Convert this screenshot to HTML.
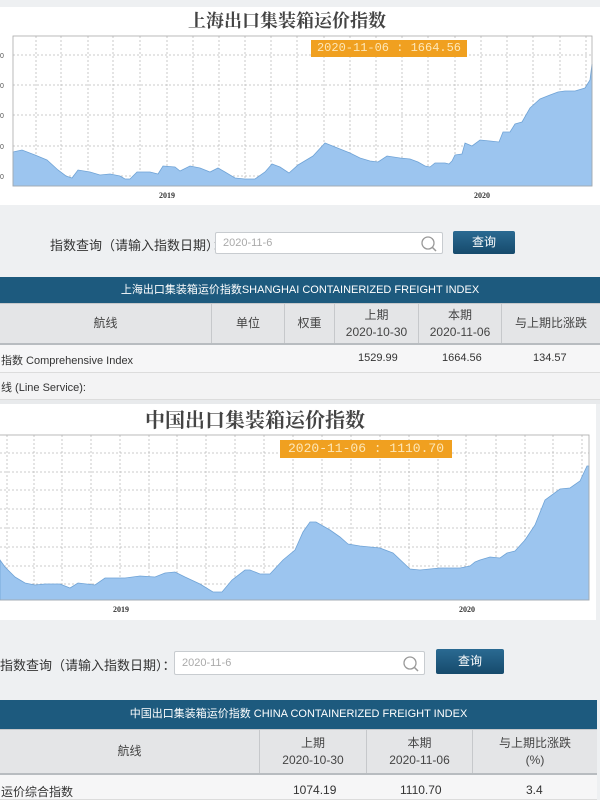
<!DOCTYPE html>
<html><head><meta charset="utf-8">
<style>
*{margin:0;padding:0;box-sizing:border-box}
body{width:600px;height:800px;overflow:hidden;background:#eef0f2;font-family:"Liberation Sans","Noto Sans CJK SC",sans-serif;position:relative;color:#333}
.a{position:absolute}
.white{background:#fff}
.title{font-family:"Liberation Serif","Noto Serif CJK SC",serif;font-weight:bold;color:#444;white-space:nowrap}
.tip{background:#f0a020;color:#fde7b8;font-family:"Liberation Mono",monospace;font-size:12px;text-align:center;line-height:17px;white-space:nowrap;overflow:hidden}
.lbl{font-size:13px;color:#333;white-space:nowrap}
.inp{background:#fff;border:1px solid #c8ccd0;border-radius:2px;font-size:11px;color:#aaa;padding-left:7px}
.btn{background:linear-gradient(#2a6a92,#164a6c);color:#fff;font-size:12px;text-align:center;border-radius:2px}
.bar{background:#1d5a7e;color:#fff;font-size:11px;text-align:center;white-space:nowrap}
.hd{background:#e4e5e7;border-top:1px solid #c6c8cb;border-bottom:2px solid #b8bcc0}
.cell{position:absolute;top:0;height:100%;border-left:1px solid #c6c8cb;font-size:12px;color:#444;display:flex;align-items:center;justify-content:center;text-align:center;line-height:17px}
.row{background:#f6f6f7;border-bottom:1px solid #dcdcdc;font-size:11px;color:#333}
.ax{font-size:8px;color:#333;font-family:"Liberation Serif",serif;font-weight:bold}
</style></head><body>

<!-- TOP SECTION -->
<div class="a white" style="left:0;top:7px;width:600px;height:198px"></div>
<div class="a title" style="left:188px;top:7px;font-size:18px">上海出口集装箱运价指数</div>
<svg class="a" style="left:0;top:0" width="600" height="205">
<g stroke="#bbb" stroke-dasharray="2,2" stroke-width="0.8">
<line x1="13" y1="55" x2="592" y2="55"/><line x1="13" y1="85" x2="592" y2="85"/><line x1="13" y1="115" x2="592" y2="115"/><line x1="13" y1="146" x2="592" y2="146"/><line x1="13" y1="176" x2="592" y2="176"/>
<line x1="36" y1="36" x2="36" y2="186"/><line x1="61" y1="36" x2="61" y2="186"/><line x1="88" y1="36" x2="88" y2="186"/><line x1="113" y1="36" x2="113" y2="186"/><line x1="140" y1="36" x2="140" y2="186"/><line x1="167" y1="36" x2="167" y2="186"/><line x1="193" y1="36" x2="193" y2="186"/><line x1="219" y1="36" x2="219" y2="186"/><line x1="245" y1="36" x2="245" y2="186"/><line x1="271" y1="36" x2="271" y2="186"/><line x1="297" y1="36" x2="297" y2="186"/><line x1="324" y1="36" x2="324" y2="186"/><line x1="350" y1="36" x2="350" y2="186"/><line x1="376" y1="36" x2="376" y2="186"/><line x1="402" y1="36" x2="402" y2="186"/><line x1="428" y1="36" x2="428" y2="186"/><line x1="455" y1="36" x2="455" y2="186"/><line x1="481" y1="36" x2="481" y2="186"/><line x1="507" y1="36" x2="507" y2="186"/><line x1="533" y1="36" x2="533" y2="186"/><line x1="560" y1="36" x2="560" y2="186"/><line x1="586" y1="36" x2="586" y2="186"/>
</g>
<path d="M13,152 L22,150 35,155 47,160 58,170 66,176 72,178 78,170 90,172 100,175 110,174 120,176 125,179 130,179 137,172 150,172 158,174 163,166 175,167 180,171 190,166 200,168 210,172 218,168 225,172 235,178 245,179 255,179 265,172 272,164 280,167 289,173 298,165 313,156 325,143 335,147 350,153 360,158 370,161 378,162 387,156 400,158 410,159 418,162 425,166 430,167 435,163 445,163 449,164 452,161 455,155 462,154 465,143 472,146 480,140 490,141 499,142 503,132 510,132 515,124 522,122 530,108 540,99 550,95 558,92 565,91 575,91 585,88 590,80 592,64 L592,186 L13,186 Z" fill="#9cc5ef" stroke="#6fa3d6" stroke-width="0.8"/>
<rect x="13" y="36" width="579" height="150" fill="none" stroke="#aaa" stroke-width="0.8"/>
<g fill="#555" font-size="7" font-family="Liberation Sans"><text x="0" y="58">0</text><text x="0" y="88">0</text><text x="0" y="118">0</text><text x="0" y="149">0</text><text x="0" y="179">0</text></g>
</svg>
<div class="a tip" style="left:311px;top:40px;width:156px;height:17px">2020-11-06 : 1664.56</div>
<div class="a ax" style="left:159px;top:191px">2019</div>
<div class="a ax" style="left:474px;top:191px">2020</div>

<div class="a lbl" style="left:50px;top:235px">指数查询（请输入指数日期）：</div>
<div class="a inp" style="left:215px;top:232px;width:228px;height:22px;line-height:20px">2020-11-6
<svg class="a" style="right:4px;top:2px" width="18" height="18"><circle cx="8" cy="8" r="6" fill="none" stroke="#999" stroke-width="1.3"/><line x1="12.5" y1="12.5" x2="16" y2="16" stroke="#999" stroke-width="1.5"/></svg></div>
<div class="a btn" style="left:453px;top:231px;width:62px;height:23px;line-height:23px">查询</div>

<div class="a bar" style="left:0;top:277px;width:600px;height:26px;line-height:26px">上海出口集装箱运价指数SHANGHAI CONTAINERIZED FREIGHT INDEX</div>
<div class="a hd" style="left:0;top:303px;width:600px;height:42px">
<div class="cell" style="left:0;width:211px;border-left:none">航线</div>
<div class="cell" style="left:211px;width:73px">单位</div>
<div class="cell" style="left:284px;width:50px">权重</div>
<div class="cell" style="left:334px;width:84px">上期<br>2020-10-30</div>
<div class="cell" style="left:418px;width:83px">本期<br>2020-11-06</div>
<div class="cell" style="left:501px;width:99px">与上期比涨跌</div>
</div>
<div class="a row" style="left:0;top:345px;width:600px;height:28px">
<span class="a" style="left:1px;top:7px">指数 Comprehensive Index</span>
<span class="a" style="left:358px;top:7px">1529.99</span>
<span class="a" style="left:442px;top:7px">1664.56</span>
<span class="a" style="left:533px;top:7px">134.57</span>
</div>
<div class="a row" style="left:0;top:373px;width:600px;height:27px;background:#f3f3f4">
<span class="a" style="left:1px;top:6px">线 (Line Service):</span></div>

<!-- BOTTOM SECTION -->
<div class="a" style="left:0;top:400px;width:600px;height:4px;background:#e8eaec"></div>
<div class="a white" style="left:0;top:404px;width:596px;height:216px"></div>
<div class="a title" style="left:145px;top:404px;font-size:20px">中国出口集装箱运价指数</div>
<svg class="a" style="left:0;top:400px" width="600" height="220">
<g stroke="#bbb" stroke-dasharray="2,2" stroke-width="0.8">
<line x1="0" y1="53" x2="589" y2="53"/><line x1="0" y1="72" x2="589" y2="72"/><line x1="0" y1="90" x2="589" y2="90"/><line x1="0" y1="109" x2="589" y2="109"/><line x1="0" y1="128" x2="589" y2="128"/><line x1="0" y1="147" x2="589" y2="147"/><line x1="0" y1="166" x2="589" y2="166"/><line x1="0" y1="184" x2="589" y2="184"/>
<line x1="7" y1="35" x2="7" y2="200"/><line x1="34" y1="35" x2="34" y2="200"/><line x1="62" y1="35" x2="62" y2="200"/><line x1="91" y1="35" x2="91" y2="200"/><line x1="120" y1="35" x2="120" y2="200"/><line x1="149" y1="35" x2="149" y2="200"/><line x1="177" y1="35" x2="177" y2="200"/><line x1="206" y1="35" x2="206" y2="200"/><line x1="235" y1="35" x2="235" y2="200"/><line x1="264" y1="35" x2="264" y2="200"/><line x1="293" y1="35" x2="293" y2="200"/><line x1="322" y1="35" x2="322" y2="200"/><line x1="351" y1="35" x2="351" y2="200"/><line x1="380" y1="35" x2="380" y2="200"/><line x1="409" y1="35" x2="409" y2="200"/><line x1="438" y1="35" x2="438" y2="200"/><line x1="466" y1="35" x2="466" y2="200"/><line x1="496" y1="35" x2="496" y2="200"/><line x1="525" y1="35" x2="525" y2="200"/><line x1="553" y1="35" x2="553" y2="200"/><line x1="582" y1="35" x2="582" y2="200"/>
</g>
<path d="M0,160 L5,167 15,177 25,183 35,185 45,184 60,184 70,188 78,183 95,185 105,178 125,178 140,176 155,177 165,173 175,172 185,177 200,184 213,192 222,192 232,180 245,170 250,170 260,174 270,174 283,160 295,150 303,132 310,122 316,122 330,130 340,137 348,144 360,146 370,147 380,148 393,153 410,169 420,170 440,168 460,168 470,166 475,162 480,160 490,157 500,158 507,153 515,151 525,140 535,125 545,100 560,89 570,88 580,81 587,66 L589,66 L589,200 L0,200 Z" fill="#9cc5ef" stroke="#6fa3d6" stroke-width="0.8"/>
<rect x="-1" y="35" width="590" height="165" fill="none" stroke="#aaa" stroke-width="0.8"/>
</svg>
<div class="a tip" style="left:280px;top:440px;width:172px;height:18px;line-height:18px;font-size:13px">2020-11-06 : 1110.70</div>
<div class="a ax" style="left:113px;top:605px">2019</div>
<div class="a ax" style="left:459px;top:605px">2020</div>

<div class="a lbl" style="left:0;top:655px">指数查询（请输入指数日期）：</div>
<div class="a inp" style="left:174px;top:651px;width:251px;height:24px;line-height:22px">2020-11-6
<svg class="a" style="right:4px;top:3px" width="18" height="18"><circle cx="8" cy="8" r="6" fill="none" stroke="#999" stroke-width="1.3"/><line x1="12.5" y1="12.5" x2="16" y2="16" stroke="#999" stroke-width="1.5"/></svg></div>
<div class="a btn" style="left:436px;top:649px;width:68px;height:25px;line-height:25px">查询</div>

<div class="a bar" style="left:0;top:700px;width:597px;height:29px;line-height:29px">中国出口集装箱运价指数 CHINA CONTAINERIZED FREIGHT INDEX</div>
<div class="a hd" style="left:0;top:729px;width:597px;height:46px">
<div class="cell" style="left:0;width:259px;border-left:none">航线</div>
<div class="cell" style="left:259px;width:107px">上期<br>2020-10-30</div>
<div class="cell" style="left:366px;width:106px">本期<br>2020-11-06</div>
<div class="cell" style="left:472px;width:125px">与上期比涨跌<br>(%)</div>
</div>
<div class="a row" style="left:0;top:775px;width:597px;height:25px;font-size:12px">
<span class="a" style="left:1px;top:8px">运价综合指数</span>
<span class="a" style="left:293px;top:8px">1074.19</span>
<span class="a" style="left:400px;top:8px">1110.70</span>
<span class="a" style="left:526px;top:8px">3.4</span>
</div>
</body></html>
